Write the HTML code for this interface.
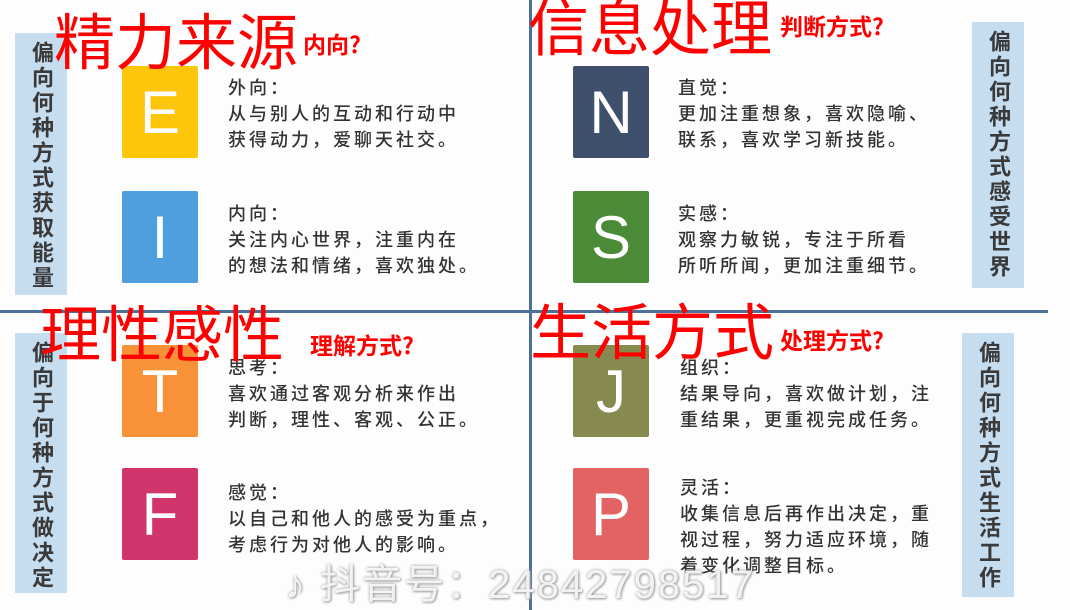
<!DOCTYPE html>
<html><head><meta charset="utf-8"><style>
*{margin:0;padding:0;box-sizing:border-box}
body{width:1070px;height:610px;background:#fdfdfd;position:relative;overflow:hidden;font-family:"Liberation Sans","Noto Sans CJK SC",sans-serif}
.a{position:absolute}
.side{position:absolute;background:#c6dcef;color:#3a3a3a;font-size:22px;writing-mode:vertical-rl;letter-spacing:3px;display:flex;align-items:center;justify-content:flex-start;padding-top:8px;line-height:52px;text-align:center;font-weight:bold}
.box{position:absolute;width:76px;height:92px;color:#fff;font-size:60px;display:flex;align-items:center;justify-content:center;border-radius:2px;font-family:"Liberation Sans",sans-serif}
.t{position:absolute;font-size:18px;letter-spacing:3px;line-height:26px;color:#333;font-weight:500;white-space:nowrap;font-family:"Noto Sans CJK SC",sans-serif}
.r{position:absolute;color:#f00;font-size:61px;line-height:60px;white-space:nowrap;font-family:"Noto Sans CJK SC",sans-serif}
.rs{position:absolute;color:#f00;font-size:23px;font-weight:bold;white-space:nowrap;font-family:"Noto Sans CJK SC",sans-serif}
</style></head><body>
<div class="a" style="left:529px;top:0;width:3px;height:610px;background:#4d7099"></div>
<div class="a" style="left:0;top:310px;width:1048px;height:3px;background:#4d7099"></div>

<div class="side" style="left:15px;top:33px;width:52px;height:262px">偏向何种方式获取能量</div>
<div class="side" style="left:972px;top:22px;width:52px;height:266px">偏向何种方式感受世界</div>
<div class="side" style="left:15px;top:333px;width:52px;height:260px">偏向于何种方式做决定</div>
<div class="side" style="left:962px;top:333px;width:52px;height:264px">偏向何种方式生活工作</div>

<div class="box" style="left:122px;top:66px;background:#fec60b">E</div>
<div class="box" style="left:122px;top:191px;background:#4f9fdf">I</div>
<div class="box" style="left:573px;top:66px;background:#3e506c">N</div>
<div class="box" style="left:573px;top:191px;background:#4b8a37">S</div>
<div class="box" style="left:122px;top:345px;background:#f99139">T</div>
<div class="box" style="left:122px;top:468px;background:#d1356c">F</div>
<div class="box" style="left:573px;top:345px;background:#868a4f">J</div>
<div class="box" style="left:573px;top:468px;background:#e36365">P</div>

<div class="t" style="left:228px;top:74px">外向：<br>从与别人的互动和行动中<br>获得动力，爱聊天社交。</div>
<div class="t" style="left:228px;top:200px">内向：<br>关注内心世界，注重内在<br>的想法和情绪，喜欢独处。</div>
<div class="t" style="left:678px;top:74px">直觉：<br>更加注重想象，喜欢隐喻、<br>联系，喜欢学习新技能。</div>
<div class="t" style="left:678px;top:200px">实感：<br>观察力敏锐，专注于所看<br>所听所闻，更加注重细节。</div>
<div class="t" style="left:228px;top:354px">思考：<br>喜欢通过客观分析来作出<br>判断，理性、客观、公正。</div>
<div class="t" style="left:228px;top:479px">感觉：<br>以自己和他人的感受为重点，<br>考虑行为对他人的影响。</div>
<div class="t" style="left:680px;top:354px">组织：<br>结果导向，喜欢做计划，注<br>重结果，更重视完成任务。</div>
<div class="t" style="left:680px;top:474px">灵活：<br>收集信息后再作出决定，重<br>视过程，努力适应环境，随<br>着变化调整目标。</div>

<div class="a" style="left:285px;top:552px;font-size:40px;color:rgba(255,255,255,0.85);text-shadow:0 0 3px #999,1px 1px 2px #aaa;white-space:nowrap;letter-spacing:2px">♪ 抖音号：24842798517</div>

<div class="r" style="left:54px;top:8px">精力来源</div>
<div class="rs" style="left:303px;top:26px">内向?</div>
<div class="r" style="left:528px;top:-6px">信息处理</div>
<div class="rs" style="left:780px;top:8px">判断方式?</div>
<div class="r" style="left:40px;top:300px">理性感性</div>
<div class="rs" style="left:310px;top:327px">理解方式?</div>
<div class="r" style="left:530px;top:298px">生活方式</div>
<div class="rs" style="left:780px;top:322px">处理方式?</div>
</body></html>
